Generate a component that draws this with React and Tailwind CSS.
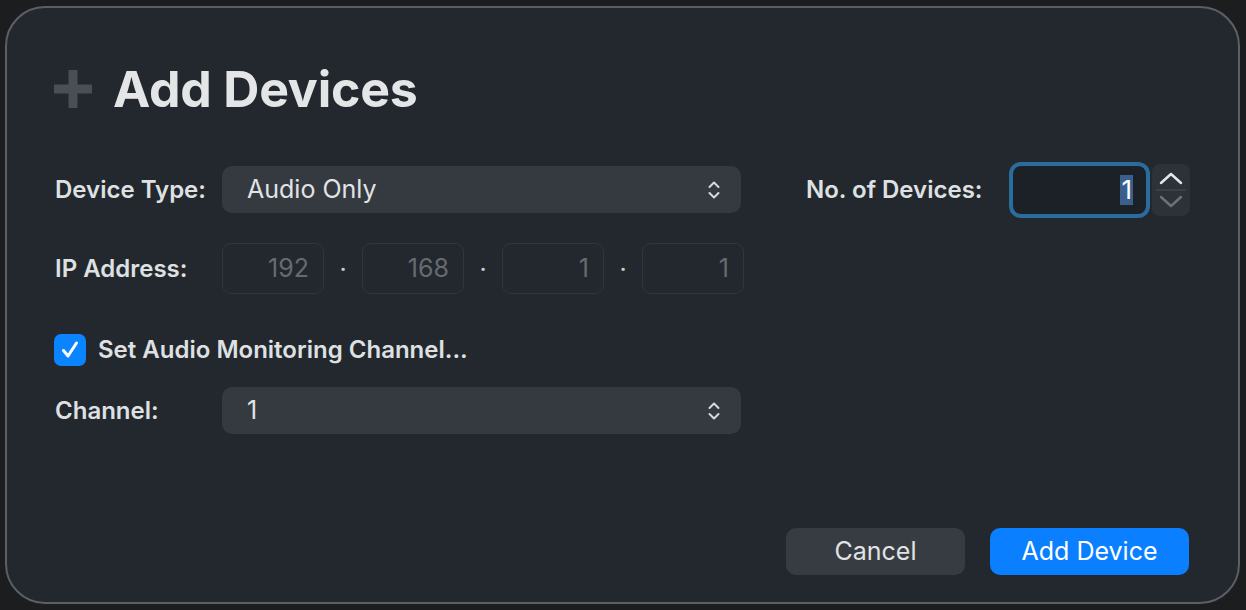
import React from 'react';

const font = { fontFamily: 'Inter, "Noto Sans", "Liberation Sans", sans-serif' };

const UpDown = () => (
  <svg width="14" height="22" viewBox="0 0 14 22" fill="none" stroke="#d8dadc" strokeWidth="2" strokeLinecap="round" strokeLinejoin="round">
    <path d="M2.5 8 L7 3.5 L11.5 8" />
    <path d="M2.5 14 L7 18.5 L11.5 14" />
  </svg>
);

const Select = ({ value }) => (
  <div className="flex items-center justify-between w-[519px] h-[47px] rounded-[10px] bg-[#343a40] pl-[25px] pr-[20px]">
    <span className="text-[25px] text-[#e2e3e5]">{value}</span>
    <UpDown />
  </div>
);

const IpBox = ({ value }) => (
  <div className="flex items-center justify-end w-[102px] h-[51px] rounded-[9px] border border-[#30363c] bg-[#22282e] pr-[14px]">
    <span className="text-[25px] text-[#656b71]">{value}</span>
  </div>
);

const Dot = () => <div className="w-[38px] flex justify-center text-[#c8cacc] text-[20px] font-bold">·</div>;

const Label = ({ children }) => (
  <div className="w-[167px] text-[24px] font-semibold text-[#dfe0e2]">{children}</div>
);

const App = () => {
  return (
    <div className="w-[1246px] h-[610px] bg-[#1c1d1f] pt-[6px] pl-[5px]" style={font}>
      <div className="w-[1235px] h-[598px] rounded-[40px] border-2 border-[#5b6066] bg-[#22282e] flex flex-col pl-[48px] pr-[49px]">
        <div className="flex items-center mt-[51px] h-[60px]">
          <svg width="40" height="40" viewBox="0 0 40 40" className="ml-[-2px]">
            <rect x="15.5" y="1" width="9" height="38" fill="#4a4f55" />
            <rect x="1" y="15.5" width="38" height="9" fill="#4a4f55" />
          </svg>
          <h1 className="ml-[20px] text-[50px] font-bold text-[#e4e5e7] tracking-[-0.2px]">Add Devices</h1>
        </div>

        <div className="flex mt-[47px]">
          <div className="flex flex-col w-[690px]">
            <div className="flex items-center">
              <Label>Device Type:</Label>
              <Select value="Audio Only" />
            </div>
            <div className="flex items-center mt-[30px]">
              <Label>IP Address:</Label>
              <IpBox value="192" />
              <Dot />
              <IpBox value="168" />
              <Dot />
              <IpBox value="1" />
              <Dot />
              <IpBox value="1" />
            </div>
            <div className="flex items-center mt-[38px] ml-[-1px]">
              <div className="w-[32px] h-[32px] rounded-[7px] bg-[#0a84ff] flex items-center justify-center">
                <svg width="22" height="22" viewBox="0 0 22 22" fill="none" stroke="white" strokeWidth="3" strokeLinecap="round" strokeLinejoin="round">
                  <path d="M4.5 11.5 L9 17 L17.5 4" />
                </svg>
              </div>
              <span className="ml-[12px] text-[24px] font-semibold text-[#dfe0e2]">Set Audio Monitoring Channel...</span>
            </div>
            <div className="flex items-center mt-[19px]">
              <Label>Channel:</Label>
              <Select value="1" />
            </div>
          </div>

          <div className="flex items-start ml-[62px] mt-[-4px]">
            <div className="h-[56px] flex items-center text-[24px] font-semibold text-[#dfe0e2] w-[203px]">No. of Devices:</div>
            <div className="w-[141px] h-[56px] rounded-[12px] border-[4px] border-[#2a6c9e] bg-[#1c2127] flex items-center justify-end pr-[13px]">
              <span className="text-[26px] text-white bg-[#3b5f8c] px-[1px] leading-[30px]">1</span>
            </div>
            <div className="ml-[2px] mt-[2px] w-[38px] h-[52px] rounded-[8px] bg-[#2c3238] flex flex-col items-center justify-center">
              <svg width="24" height="14" viewBox="0 0 24 14" fill="none" stroke="#e4e5e7" strokeWidth="2.5" strokeLinecap="round" strokeLinejoin="round">
                <path d="M2 12 L12 3 L22 12" />
              </svg>
              <div className="w-[30px] h-[2px] bg-[#3a4046] my-[4px]" />
              <svg width="24" height="14" viewBox="0 0 24 14" fill="none" stroke="#6b7177" strokeWidth="2.5" strokeLinecap="round" strokeLinejoin="round">
                <path d="M2 2 L12 11 L22 2" />
              </svg>
            </div>
          </div>
        </div>

        <div className="mt-auto mb-[27px] flex justify-end gap-[25px]">
          <button className="w-[179px] h-[47px] rounded-[10px] bg-[#363c42] text-[25px] text-[#e2e3e5]">Cancel</button>
          <button className="w-[199px] h-[47px] rounded-[10px] bg-[#0a7fff] text-[25px] text-white">Add Device</button>
        </div>
      </div>
    </div>
  );
};

export default App;
